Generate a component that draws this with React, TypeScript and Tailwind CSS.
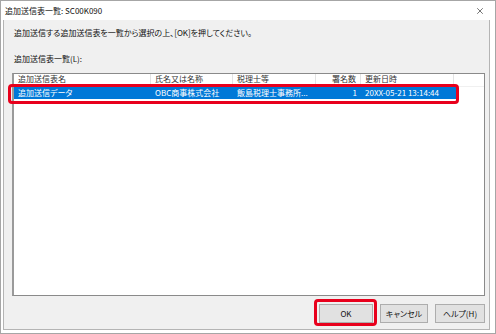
import { X } from 'lucide-react';

const font = "font-['Meiryo_UI','Noto_Sans_CJK_JP',sans-serif] [font-feature-settings:'palt']";

const columns = [
  { label: '追加送信表名', width: 'w-[137px]', align: 'text-left' },
  { label: '氏名又は名称', width: 'w-[82px]', align: 'text-left' },
  { label: '税理士等', width: 'w-[83px]', align: 'text-left' },
  { label: '署名数', width: 'w-[45px]', align: 'text-right' },
  { label: '更新日時', width: 'w-[93px]', align: 'text-left' },
];

const row = ['追加送信データ', 'OBC商事株式会社', '飯島税理士事務所...', '1', '20XX-05-21 13:14:44'];

export default function App() {
  return (
    <div className={`w-[496px] h-[334px] bg-white border border-[#a6a6a6] flex flex-col text-[8px] leading-none text-[#111] ${font}`}>
      {/* title bar */}
      <div className="h-[19px] shrink-0 flex items-center justify-between pl-[4px] pr-[10px] bg-white">
        <span>追加送信表一覧: SC00K090</span>
        <X className="w-[10px] h-[10px] text-[#222]" strokeWidth={1.5} />
      </div>

      <div className="flex-1 ml-[2px] mr-[5px] mb-[3px] bg-[#f0f0f0] border-l border-r border-b border-[#b4b4b4] flex flex-col relative">
        <p className="mt-[9px] ml-[10px]">追加送信する追加送信表を一覧から選択の上、[OK]を押してください。</p>
        <p className="mt-[18px] ml-[10px]">追加送信表一覧(L):</p>

        {/* list view */}
        <div className="mt-[10px] ml-[8px] mr-[4px] h-[223px] bg-white border border-[#8a8a8a] border-l-2 border-l-[#9a9a9a] flex flex-col">
          <div className="h-[13px] flex border-b border-[#f0f0f0]">
            {columns.map((c) => (
              <div
                key={c.label}
                className={`${c.width} ${c.align} h-full border-r border-[#e3e3e3] px-[4px] pb-[2px] flex items-center ${c.align === 'text-right' ? 'justify-end' : ''} text-[#333]`}
              >
                {c.label}
              </div>
            ))}
          </div>
          <div className="h-[12px] flex bg-[#0078d7] text-white w-[442px]">
            {columns.map((c, i) => (
              <div
                key={c.label}
                className={`${c.width} h-full px-[4px] flex items-center ${c.align === 'text-right' ? 'justify-end' : ''} whitespace-nowrap overflow-hidden`}
              >
                {row[i]}
              </div>
            ))}
          </div>
        </div>

        {/* buttons */}
        <div className="mt-[8px] flex justify-end gap-[7px] mr-[4px]">
          <button className="w-[54px] h-[19px] bg-[#e1e1e1] border border-[#adadad]">OK</button>
          <button className="w-[48px] h-[19px] bg-[#e1e1e1] border border-[#adadad]">キャンセル</button>
          <button className="w-[50px] h-[19px] bg-[#e1e1e1] border border-[#adadad]">ヘルプ(H)</button>
        </div>

        {/* red callouts */}
        <div className="absolute left-[4px] top-[64px] w-[451px] h-[20px] border-[3px] border-[#e8001c] rounded-[4px]" />
        <div className="absolute left-[310px] top-[279px] w-[63px] h-[27px] border-[3px] border-[#e8001c] rounded-[4px]" />
      </div>
    </div>
  );
}
